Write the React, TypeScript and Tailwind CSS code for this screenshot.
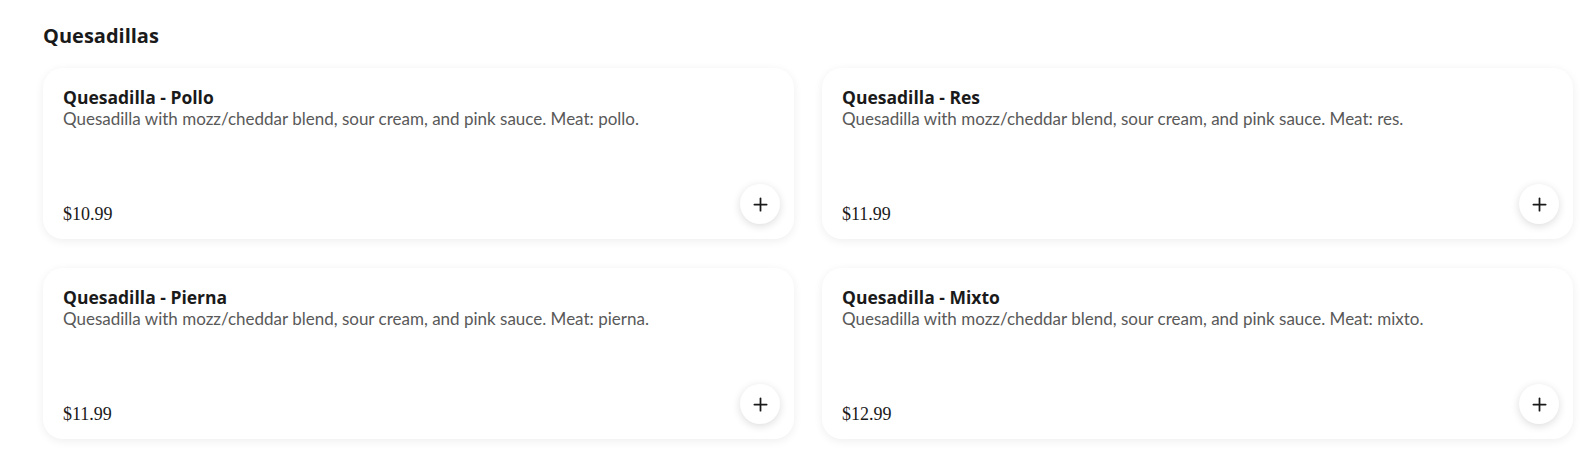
import React from 'react';
import { Plus } from 'lucide-react';

const items = [
  { name: 'Quesadilla - Pollo', meat: 'pollo', price: '$10.99' },
  { name: 'Quesadilla - Res', meat: 'res', price: '$11.99' },
  { name: 'Quesadilla - Pierna', meat: 'pierna', price: '$11.99' },
  { name: 'Quesadilla - Mixto', meat: 'mixto', price: '$12.99' },
];

const App = () => {
  return (
    <div className="min-h-screen bg-white font-['Lato','Open_Sans',sans-serif]">
      <section className="ml-[43px] w-[1530px] pt-[22px]">
        <h2 className="font-['Open_Sans',sans-serif] text-[20px] leading-[28px] font-bold text-[#1a1a1a]">
          Quesadillas
        </h2>

        <div className="mt-[18px] grid grid-cols-2 gap-x-[28px] gap-y-[29px]">
          {items.map((item) => (
            <div
              key={item.name}
              className="relative flex h-[171px] flex-col justify-between rounded-[20px] bg-white px-5 pt-[18px] pb-[13px] shadow-[0_2px_10px_rgba(0,0,0,0.07)]"
            >
              <div>
                <h3 className="font-['Open_Sans',sans-serif] text-[17.5px] leading-[22px] font-bold text-[#1a1a1a]">
                  {item.name}
                </h3>
                <p className="text-[17px] leading-[21px] text-[#595959]">
                  Quesadilla with mozz/cheddar blend, sour cream, and pink sauce. Meat: {item.meat}.
                </p>
              </div>
              <div className="font-['Liberation_Serif',serif] text-[18px] leading-[24px] text-[#1a1a1a]">
                {item.price}
              </div>
              <button className="absolute right-[14px] bottom-[15px] flex h-10 w-10 items-center justify-center rounded-full bg-white shadow-[0_2px_8px_rgba(0,0,0,0.14)]">
                <Plus size={21} strokeWidth={2} className="text-[#1a1a1a]" />
              </button>
            </div>
          ))}
        </div>
      </section>
    </div>
  );
};

export default App;
